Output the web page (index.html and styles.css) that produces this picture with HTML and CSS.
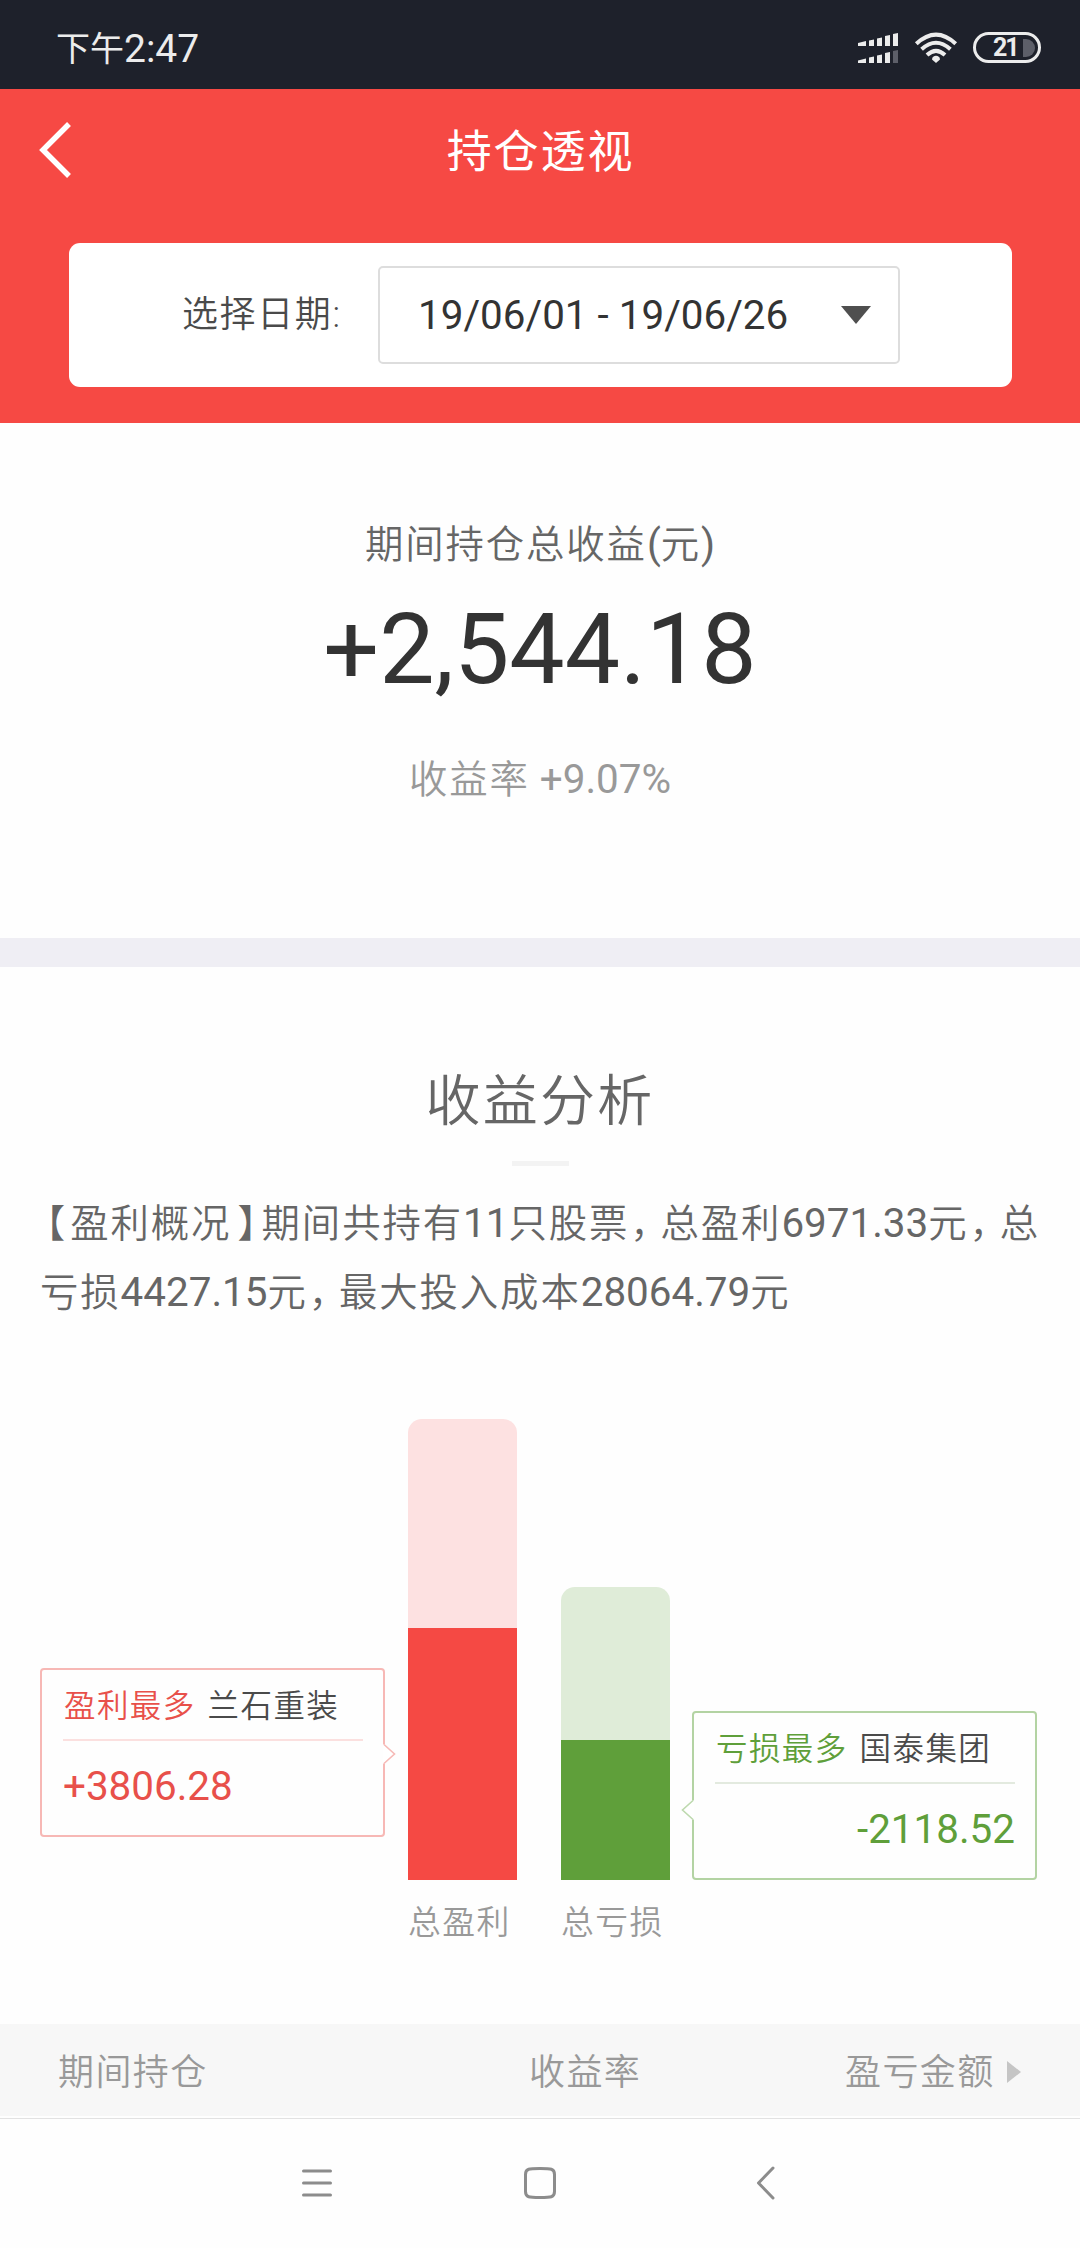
FILE: index.html
```html
<!DOCTYPE html>
<html lang="zh-CN">
<head>
<meta charset="utf-8">
<title>持仓透视</title>
<link rel="stylesheet" href="styles.css">
</head>
<body>
<div class="screen">
  <div class="status-bar">
    <div class="clock"><span class="clock-period">下午</span><span class="clock-time">2:47</span></div>
    <div class="status-icons">
      <svg class="signal" width="40" height="30" viewBox="0 0 40 30" fill="#ececec">
        <path d="M0 10l8-2v5H0zM11 7.500l5-1V13h-5zM19 5.500l5-1V13h-5zM27 3l5-1V13h-5zM35 1l5-1V13h-5z"/>
        <path d="M0 27.500l8-2V30H0zM11 24.500l5-1V30h-5zM19 22.500l5-1V30h-5zM27 20l5-1V30h-5z"/>
        <path d="M35 18l5-1V30h-5z" fill="#5d5f69"/>
      </svg>
      <svg class="wifi" width="44" height="32" viewBox="0 0 44 32" fill="none" stroke="#ececec" stroke-width="4">
        <path d="M2.300 11.800Q22-6.500 41.700 11.800"/>
        <path d="M7.600 17.300Q22 4.200 36.400 17.300"/>
        <path d="M13 23Q22 14.600 31 23"/>
        <path d="M22 31l-4-3.500c0-5 8-5 8 0z" fill="#ececec" stroke="none"/>
      </svg>
      <div class="battery"><span class="battery-level">21</span><span class="battery-empty"></span></div>
    </div>
  </div>

  <header class="header">
    <div class="title-row">
      <svg class="back" width="36" height="60" viewBox="0 0 36 60" fill="none" stroke="#fff" stroke-width="5.500"><path d="M32 4L6 30l26 26"/></svg>
      <h1 class="page-title">持仓透视</h1>
    </div>
    <div class="date-card">
      <span class="date-label">选择日期:</span>
      <div class="date-select">
        <span>19/06/01 - 19/06/26</span>
        <svg width="30" height="18" viewBox="0 0 30 18"><path d="M0 0h30L15 18z" fill="#4f4f4f"/></svg>
      </div>
    </div>
  </header>

  <section class="summary">
    <div class="summary-label">期间持仓总收益<span class="num">(</span>元<span class="num">)</span></div>
    <div class="summary-value">+2,544.18</div>
    <div class="summary-rate">收益率<span class="num"> +9.07%</span></div>
  </section>

  <section class="analysis">
    <h2 class="section-title">收益分析</h2>
    <div class="title-rule"></div>
    <p class="overview"><span class="punct open">【</span>盈利概况<span class="punct close">】</span>期间共持有<span class="num">11</span>只股票<span class="punct comma">，</span>总盈利<span class="num">6971.33</span>元<span class="punct comma">，</span>总<br>亏损<span class="num">4427.15</span>元<span class="punct comma">，</span>最大投入成本<span class="num">28064.79</span>元</p>

    <div class="chart">
      <div class="callout callout-gain">
        <div class="callout-head"><span class="callout-kind">盈利最多</span><span class="callout-name">兰石重装</span></div>
        <div class="callout-amount">+3806.28</div>
        <svg class="pointer" width="13" height="22" viewBox="0 0 13 22"><path d="M0 1.500h2L11.500 11 2 20.500H0z" fill="#fff"/><path d="M1 1.500L11.500 11 1 20.500" fill="none" stroke="#f6bab7" stroke-width="1.600"/></svg>
      </div>
      <div class="bars">
        <div class="bar-column">
          <div class="bar bar-gain"><div class="bar-fill" style="height:252px"></div></div>
          <div class="bar-label">总盈利</div>
        </div>
        <div class="bar-column">
          <div class="bar bar-loss"><div class="bar-fill" style="height:140px"></div></div>
          <div class="bar-label">总亏损</div>
        </div>
      </div>
      <div class="callout callout-loss">
        <div class="callout-head"><span class="callout-kind">亏损最多</span><span class="callout-name">国泰集团</span></div>
        <div class="callout-amount">-2118.52</div>
        <svg class="pointer" width="13" height="22" viewBox="0 0 13 22"><path d="M13 1.500h-2L1.500 11l9.500 9.500h2z" fill="#fff"/><path d="M12 1.500L1.500 11 12 20.500" fill="none" stroke="#bdd9ae" stroke-width="1.600"/></svg>
      </div>
    </div>
  </section>

  <div class="table-head">
    <span class="col-stock">期间持仓</span>
    <span class="col-rate">收益率</span>
    <span class="col-amount">盈亏金额<svg class="sort" width="14" height="22" viewBox="0 0 14 22"><path d="M0 0l14 11L0 22z" fill="#c5c5c5"/></svg></span>
  </div>

  <nav class="nav-bar">
    <svg width="34" height="36" viewBox="0 0 34 36" fill="none" stroke="#8c8c8c" stroke-width="3" stroke-linecap="round"><path d="M3.500 6h27M3.500 18h27M3.500 30h27"/></svg>
    <svg width="34" height="36" viewBox="0 0 34 36" fill="none" stroke="#8c8c8c" stroke-width="3"><path d="M17 3.500c11 0 14.500 0 14.500 6v17c0 6-3.500 6-14.500 6s-14.500 0-14.500-6v-17c0-6 3.500-6 14.500-6z"/></svg>
    <svg width="34" height="36" viewBox="0 0 34 36" fill="none" stroke="#8c8c8c" stroke-width="3" stroke-linecap="round" stroke-linejoin="round"><path d="M27 3L12.500 18 27 33"/></svg>
  </nav>
</div>
</body>
</html>
```
FILE: styles.css
```css
* { box-sizing: border-box; }
body {
  margin: 0;
  background: #fefefe;
  font-family: Roboto, "Noto Sans CJK SC", sans-serif;
  font-weight: 350;
  color: #666;
  font-size: 38.400px;
  letter-spacing: 1.900px;
}
h1, h2, p { margin: 0; font-weight: inherit; }
svg { display: block; flex: none; }
.num { font-size: 40.400px; font-weight: 400; letter-spacing: 0; }
.screen { width: 1080px; height: 2248px; display: flex; flex-direction: column; overflow: hidden; white-space: nowrap; }

.status-bar {
  height: 89px;
  background: #1e212b;
  color: #ececec;
  display: flex;
  justify-content: space-between;
  padding: 0 39px 0 56px;
  letter-spacing: 0;
}
.clock { display: flex; align-items: center; line-height: 40px; padding-top: 9px; font-weight: 400; }
.clock-period { font-size: 34px; }
.clock-time { font-size: 39px; }
.status-icons { display: flex; padding-top: 32px; }
.signal { margin: 1px 16px 0 0; }
.wifi { margin-right: 15px; }
.battery {
  width: 68px; height: 31px;
  border: 3px solid #ececec;
  border-radius: 16px;
  display: flex; align-items: center; justify-content: flex-end;
  gap: 4px; padding-right: 3px;
}
.battery-level { font-size: 25px; line-height: 25px; font-weight: 700; letter-spacing: -2px; width: 26px; }
.battery-empty { width: 12px; height: 18px; background: #5d5f69; border-radius: 0 9px 9px 0; }

.header { height: 334px; background: #f64944; padding: 0 68px 0 69px; }
.title-row { height: 154px; display: flex; align-items: center; justify-content: center; padding-bottom: 26px; position: relative; }
.back { position: absolute; left: -32px; top: 31px; }
.page-title { color: #fff; font-size: 45px; line-height: 60px; font-weight: 400; }
.date-card {
  height: 144px; background: #fff; border-radius: 11px;
  display: flex; align-items: center; padding-left: 113px;
}
.date-label { width: 196px; font-size: 36px; letter-spacing: 1.600px; color: #4a4a4a; line-height: 60px; }
.date-select {
  width: 522px; height: 98px;
  border: 2px solid #ddd; border-radius: 5px;
  display: flex; align-items: center; justify-content: space-between;
  padding: 0 27px 0 38px;
  color: #333; font-weight: 400; font-size: 40.400px; letter-spacing: 0;
}

.summary { height: 515px; text-align: center; padding-top: 92px; }
.summary-label { line-height: 60px; height: 60px; }
.summary-value { font-size: 98.500px; font-weight: 400; line-height: 116px; height: 116px; color: #333; margin-top: 17px; letter-spacing: 0; }
.summary-rate { line-height: 60px; color: #999; margin-top: 42px; }

.analysis { border-top: 29px solid #efeef4; height: 1086px; padding-top: 99px; }
.section-title { font-size: 55px; letter-spacing: 2.200px; line-height: 70px; text-align: center; }
.title-rule { width: 57px; height: 5px; margin: 25px auto 0; background: #f3f3f3; }
.overview { padding: 23px 0 0 40px; line-height: 69px; height: 161px; }
.punct { font-feature-settings: "halt"; letter-spacing: 0; }
.open { margin: 0 5px 0 6px; }
.close { margin: 0 5px 0 6px; }
.comma { margin: 0 11px 0 1px; }

.chart { display: flex; height: 579px; margin-top: 32px; padding: 60px 43px 0 40px; }
.bars { display: flex; gap: 44px; align-items: flex-end; margin: 0 22px 0 23px; height: 519px; }
.bar-column { width: 109px; }
.bar { border-radius: 14px 14px 0 0; display: flex; align-items: flex-end; overflow: hidden; }
.bar-fill { width: 100%; }
.bar-gain { height: 461px; background: #fde1e1; }
.bar-gain .bar-fill { background: #f54944; }
.bar-loss { height: 293px; background: #dfecd8; }
.bar-loss .bar-fill { background: #5f9f3a; }
.bar-label { height: 58px; line-height: 86px; font-size: 32.800px; letter-spacing: 1.500px; color: #999; }

.callout { position: relative; width: 345px; height: 169px; border-radius: 4px; padding: 0 20px 0 21px; }
.callout-gain { border: 2px solid #f7b8b5; color: #e8504a; margin-top: 249px; }
.callout-loss { border: 2px solid #b3d3a3; color: #5f9f3a; margin-top: 292px; }
.callout-head { height: 71px; line-height: 74px; font-size: 31.500px; letter-spacing: 1.400px; border-bottom: 2px solid; display: flex; gap: 12px; padding-left: 1px; }
.callout-gain .callout-head { border-color: #fbe0df; }
.callout-loss .callout-head { border-color: #e3eadf; }
.callout-name { color: #4a4a4a; }
.callout-amount { font-weight: 400; font-size: 40.400px; line-height: 92px; letter-spacing: 0; }
.callout-loss .callout-amount { text-align: right; }
.pointer { position: absolute; top: 73px; }
.callout-gain .pointer { right: -13px; }
.callout-loss .pointer { left: -13px; top: 86px; }

.table-head {
  height: 92px; background: #f7f7f7; color: #999;
  display: grid; grid-template-columns: 471px 316px auto; align-items: center;
  padding: 0 0 2px 58px; font-size: 36px; letter-spacing: 1.400px;
}
.col-amount { display: flex; align-items: center; gap: 12px; }
.sort { margin-top: 6px; }
.nav-bar {
  height: 130px; margin-top: 2px; border-top: 1px solid #e2e2e2;
  display: flex; justify-content: center; gap: 189px; padding: 46px 0 0;
}
```
